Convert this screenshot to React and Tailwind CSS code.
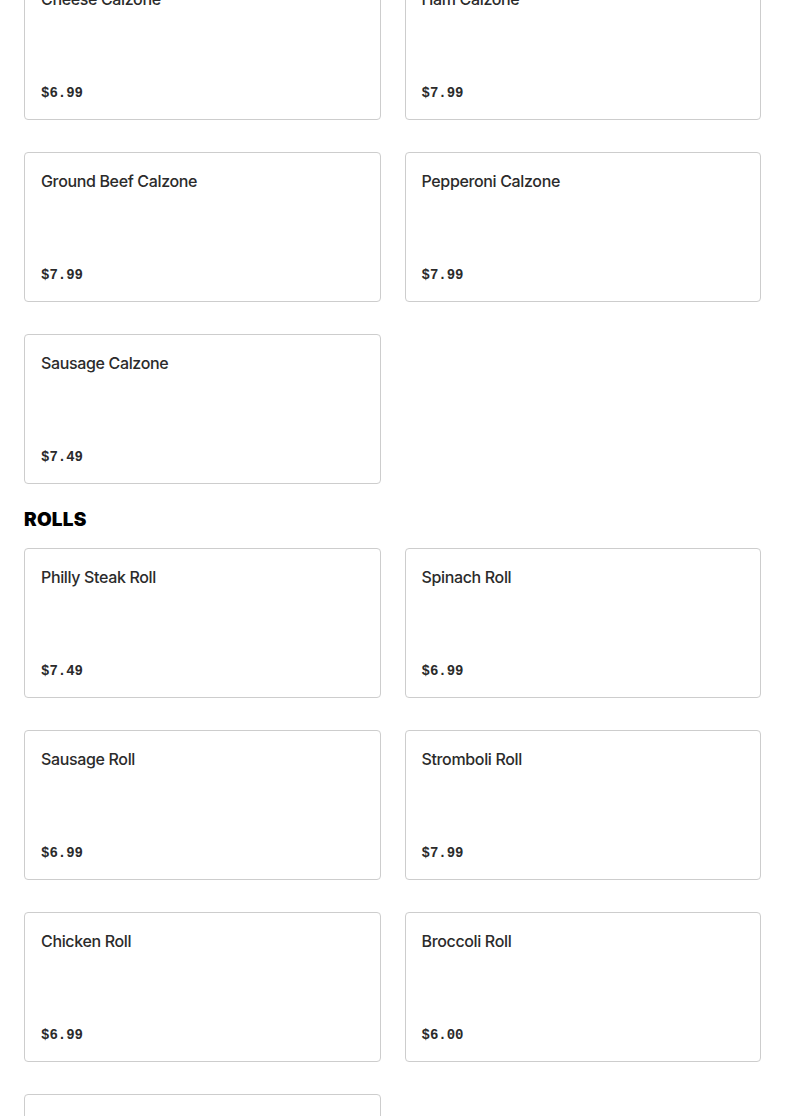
import React from 'react';

const calzones = [
  { name: 'Cheese Calzone', price: '$6.99' },
  { name: 'Ham Calzone', price: '$7.99' },
  { name: 'Ground Beef Calzone', price: '$7.99' },
  { name: 'Pepperoni Calzone', price: '$7.99' },
  { name: 'Sausage Calzone', price: '$7.49' },
];

const rolls = [
  { name: 'Philly Steak Roll', price: '$7.49' },
  { name: 'Spinach Roll', price: '$6.99' },
  { name: 'Sausage Roll', price: '$6.99' },
  { name: 'Stromboli Roll', price: '$7.99' },
  { name: 'Chicken Roll', price: '$6.99' },
  { name: 'Broccoli Roll', price: '$6.00' },
  { name: 'Pizza Roll', price: '$6.99' },
];

const MenuCard = ({ item }) => (
  <div className="h-[150px] border border-[#cdcdcd] rounded-[4px] bg-white p-4 flex flex-col justify-between">
    <h4 className="text-[16px] leading-6 font-medium text-[#2b2b2b] font-['Inter',sans-serif] tracking-[-0.35px]">
      {item.name}
    </h4>
    <p className="text-[14px] leading-[18px] mb-[1px] font-bold text-[#2b2b2b] font-['Liberation_Mono',monospace]">
      {item.price}
    </p>
  </div>
);

const Section = ({ items }) => (
  <div className="grid grid-cols-2 gap-x-6 gap-y-8">
    {items.map((item) => (
      <MenuCard key={item.name} item={item} />
    ))}
  </div>
);

export default function App() {
  return (
    <div className="h-[1116px] overflow-hidden bg-white">
      <div className="px-6 -mt-[30px]">
        <Section items={calzones} />
        <h3 className="pt-[22px] pb-[14px] text-[19px] leading-7 font-black uppercase text-black font-['Inter',sans-serif] tracking-[0.2px]">
          Rolls
        </h3>
        <Section items={rolls} />
      </div>
    </div>
  );
}
